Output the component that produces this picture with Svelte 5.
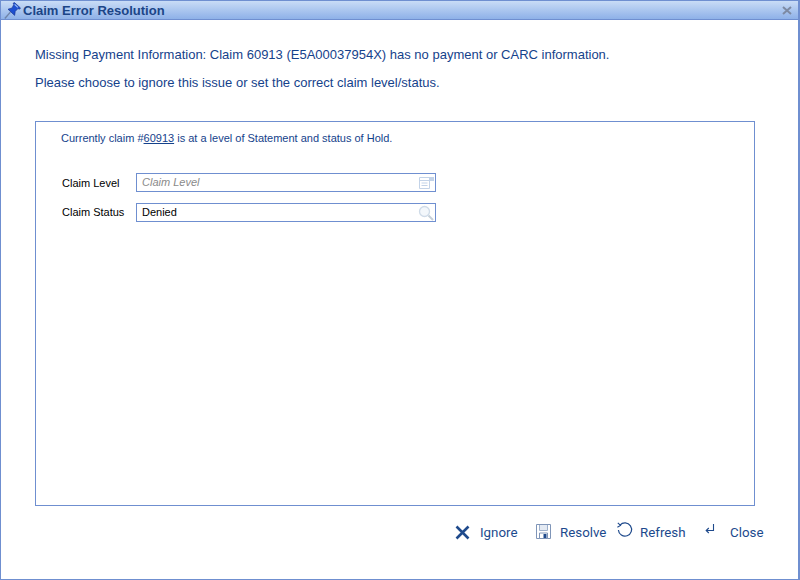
<script lang="ts">
  let claimLevel = $state('');
  let claimStatus = $state('Denied');
</script>

<div class="window">
  <header class="titlebar">
    <svg class="pin" width="17" height="17" viewBox="0 0 16 16">
      <path d="M.8 15.5 L6 9.5" stroke="#6f84a8" stroke-width="1.3" />
      <path d="M3.8 6.8 L7.6 5.6 L9.2 2.4 L8.6 1.2 L9.8 .5 L15.5 5.6 L14.6 6.8 L13.2 6.2 L10.6 8.8 L10 12.6 Z" fill="#1d4fd0" stroke="#14308a" stroke-width="0.6" />
      <path d="M10 2.2 L13 5" stroke="#9cc0f8" stroke-width="1.1" />
    </svg>
    <span class="title">Claim Error Resolution</span>
    <svg class="x" width="10" height="9" viewBox="0 0 10 9">
      <path d="M1 1 L9 8 M9 1 L1 8" stroke="#7d8aa3" stroke-width="2" />
    </svg>
  </header>

  <div class="body">
    <p class="msg first">Missing Payment Information: Claim 60913 (E5A00037954X) has no payment or CARC information.</p>
    <p class="msg">Please choose to ignore this issue or set the correct claim level/status.</p>

    <section class="panel">
      <p class="status">Currently claim #<u>60913</u> is at a level of Statement and status of Hold.</p>

      <div class="fields">
        <label class="field">
          <span class="lbl">Claim Level</span>
          <span class="box">
            <input placeholder="Claim Level" bind:value={claimLevel} />
            <svg width="15" height="13" viewBox="0 0 15 13">
              <path d="M.5 1.5H10.5V12.5H.5Z M.5 4.5H10.5 M2.5 7H8.5 M2.5 9.5H8.5" fill="none" stroke="#c3d3e8" />
              <path d="M10 1H15V5H10Z" fill="#c3d3e8" />
            </svg>
          </span>
        </label>
        <label class="field status-field">
          <span class="lbl">Claim Status</span>
          <span class="box">
            <input bind:value={claimStatus} />
            <svg width="16" height="16" viewBox="0 0 16 16">
              <circle cx="6.5" cy="6.5" r="5" fill="#f3f7fb" stroke="#cfdbe8" stroke-width="1.3" />
              <path d="M10.5 10.5L15 15" stroke="#c5cfd9" stroke-width="2" />
            </svg>
          </span>
        </label>
      </div>
    </section>

    <footer class="actions">
      <button class="ignore">
        <svg width="15" height="15" viewBox="0 0 15 15">
          <path d="M1.5 1.5L13.5 13.5M13.5 1.5L1.5 13.5" stroke="#1f4a8c" stroke-width="2.6" />
        </svg>
        Ignore
      </button>
      <button class="resolve">
        <svg width="15" height="15" viewBox="0 0 15 15">
          <path d="M.5.5H14.5V14.5H.5Z" fill="#fff" stroke="#7f95b8" />
          <path d="M3.5 1V6.5H11.5V1" fill="#e4eaf3" stroke="#9db0cc" />
          <path d="M3.5 14.5V9H11.5V14.5Z" fill="#fff" stroke="#7f95b8" />
          <path d="M7.5 10H10.5V14H7.5Z" fill="#1f4a8c" />
        </svg>
        Resolve
      </button>
      <button class="refresh">
        <svg width="16" height="16" viewBox="0 0 16 16">
          <path d="M3 3.2A6.6 6.6 0 1 1 1.4 8" fill="none" stroke="#1f4a8c" stroke-width="1.2" />
          <path d="M.8 .8L3.5 3.4L.4 5.2" fill="none" stroke="#1f4a8c" stroke-width="1.1" />
        </svg>
        Refresh
      </button>
      <button class="close">
        <svg width="10" height="11" viewBox="0 0 10 11">
          <path d="M8.5 0V6.5H1.5" fill="none" stroke="#1f4a8c" stroke-width="1.1" />
          <path d="M3.8 4L1.2 6.5L3.8 9" fill="none" stroke="#1f4a8c" stroke-width="1.1" />
        </svg>
        Close
      </button>
    </footer>
  </div>
</div>

<style>
  :global(body) {
    margin: 0;
    background: #fff;
  }

  .window {
    box-sizing: border-box;
    width: 800px;
    height: 580px;
    display: flex;
    flex-direction: column;
    border: 1px solid #6f8fd0;
    border-width: 1px 2px 1px 1px;
    background: #fff;
    font-family: "Liberation Sans", Arial, sans-serif;
    overflow: hidden;
  }

  .titlebar {
    flex: none;
    height: 18px;
    display: flex;
    align-items: center;
    gap: 2px;
    padding: 0 6px 0 3px;
    background: linear-gradient(#c9dcf6, #8eb1e8);
    border-bottom: 1px solid #6f8fd0;
  }

  .title {
    flex: 1;
    font-size: 13px;
    font-weight: bold;
    color: #1b4587;
  }

  .body {
    flex: 1;
    display: flex;
    flex-direction: column;
    padding: 27px 0 0 34px;
  }

  .msg {
    margin: 0 0 13px;
    font-size: 13px;
    line-height: 15px;
    color: #15428b;
  }

  .panel {
    box-sizing: border-box;
    width: 720px;
    height: 385px;
    margin-top: 18px;
    padding: 10px 25px;
    border: 1px solid #6f8fd0;
  }

  .status {
    margin: 0;
    font-size: 11px;
    line-height: 13px;
    color: #15428b;
  }

  .status u {
    text-decoration: underline;
  }

  .fields {
    display: flex;
    flex-direction: column;
    gap: 11px;
    margin-top: 28px;
  }

  .field {
    display: flex;
    align-items: center;
    margin-left: 1px;
  }

  .lbl {
    width: 74px;
    font-size: 11px;
    color: #000;
  }

  .status-field .lbl {
    padding-bottom: 2px;
  }

  .box {
    box-sizing: border-box;
    width: 300px;
    height: 19px;
    display: flex;
    align-items: center;
    padding: 0 1px 0 5px;
    border: 1px solid #6f8fd0;
  }

  .box input {
    flex: 1;
    min-width: 0;
    border: none;
    outline: none;
    padding: 0 0 2px;
    background: none;
    font-family: inherit;
    font-size: 11px;
    color: #000;
  }

  .box input::placeholder {
    font-style: italic;
    color: #8a8a8a;
    opacity: 1;
  }

  .actions {
    display: flex;
    height: 22px;
    margin-top: 15px;
    padding-left: 420px;
  }

  .actions button {
    display: flex;
    align-items: center;
    padding: 0;
    border: none;
    background: none;
    font-family: Roboto, sans-serif;
    font-size: 13.33px;
    color: #1c4a8d;
  }

  .ignore { width: 81px; gap: 10px; }
  .resolve { width: 81px; gap: 9px; }
  .refresh { width: 88px; gap: 7px; }
  .close { gap: 15px; }
  .resolve svg { margin-bottom: 2px; }
  .refresh svg { margin-bottom: 4px; }
  .close svg { margin-bottom: 5px; }
</style>
